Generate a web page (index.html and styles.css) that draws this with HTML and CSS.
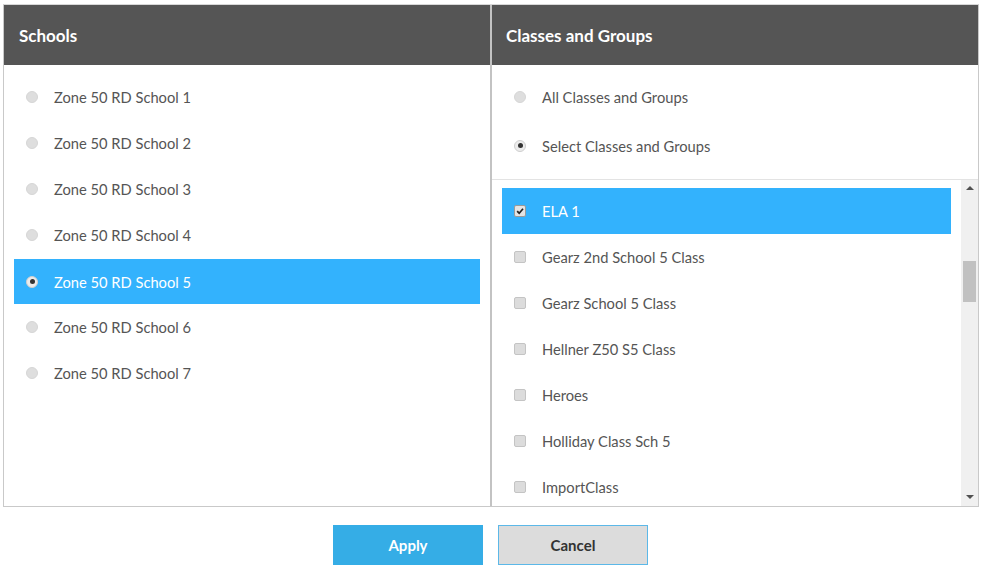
FILE: index.html
```html
<!DOCTYPE html>
<html>
<head>
<meta charset="utf-8">
<link rel="stylesheet" href="styles.css">
</head>
<body>
<div class="dialog">
  <div class="panel left">
    <div class="header">Schools</div>
    <div class="list">
      <div class="row"><span class="radio"></span><span>Zone 50 RD School 1</span></div>
      <div class="row"><span class="radio"></span><span>Zone 50 RD School 2</span></div>
      <div class="row"><span class="radio"></span><span>Zone 50 RD School 3</span></div>
      <div class="row"><span class="radio"></span><span>Zone 50 RD School 4</span></div>
      <div class="row selected"><span class="radio on"></span><span>Zone 50 RD School 5</span></div>
      <div class="row"><span class="radio"></span><span>Zone 50 RD School 6</span></div>
      <div class="row"><span class="radio"></span><span>Zone 50 RD School 7</span></div>
    </div>
  </div>
  <div class="divider"></div>
  <div class="panel right">
    <div class="header">Classes and Groups</div>
    <div class="options">
      <div class="row opt"><span class="radio"></span><span>All Classes and Groups</span></div>
      <div class="row opt"><span class="radio on"></span><span>Select Classes and Groups</span></div>
    </div>
    <div class="scroller">
      <div class="list classes">
        <div class="row selected"><span class="check on"><svg viewBox="0 0 12 12" width="12" height="12"><path d="M2.6 6.2 L5 8.6 L9.6 3.2" fill="none" stroke="#222" stroke-width="2"/></svg></span><span>ELA 1</span></div>
        <div class="row"><span class="check"></span><span>Gearz 2nd School 5 Class</span></div>
        <div class="row"><span class="check"></span><span>Gearz School 5 Class</span></div>
        <div class="row"><span class="check"></span><span>Hellner Z50 S5 Class</span></div>
        <div class="row"><span class="check"></span><span>Heroes</span></div>
        <div class="row"><span class="check"></span><span>Holliday Class Sch 5</span></div>
        <div class="row"><span class="check"></span><span>ImportClass</span></div>
        <div class="row"><span class="check"></span><span>Math 5</span></div>
      </div>
      <div class="scrollbar">
        <span class="arrow up"></span>
        <span class="track"><span class="thumb"></span></span>
        <span class="arrow down"></span>
      </div>
    </div>
  </div>
</div>
<div class="buttons">
  <button class="btn apply">Apply</button>
  <button class="btn cancel">Cancel</button>
</div>
</body>
</html>
```
FILE: styles.css
```css
* { box-sizing: border-box; }
body {
  margin: 0;
  padding: 4px 0 0 3px;
  font-family: "Source Sans Pro", Lato, "Liberation Sans", sans-serif;
  font-size: 14.7px;
  color: #555;
  background: #fff;
}
.dialog {
  width: 976px;
  height: 503px;
  border: 1px solid #c9c9c9;
  border-top-color: #d8d8d8;
  display: flex;
  overflow: hidden;
}
.panel {
  display: flex;
  flex-direction: column;
  height: 100%;
}
.left { width: 486px; }
.right { flex: 1; min-width: 0; }
.divider {
  width: 2px;
  background: #c3c3c3;
}
.header {
  height: 60px;
  flex: none;
  background: #555;
  color: #fff;
  font-weight: bold;
  font-size: 17px;
  display: flex;
  align-items: center;
  padding-left: 14px;
}
.left .header { padding-left: 15px; }
.list {
  padding: 9px 10px 0 10px;
}
.row {
  height: 46px;
  display: flex;
  align-items: center;
  padding-left: 12px;
  gap: 16px;
  white-space: nowrap;
}
.row.selected {
  background: #33b2fd;
  color: #fff;
  height: 45px;
  margin-top: 1px;
}
.classes .row.selected {
  margin-top: 0;
  height: 46px;
}
.radio {
  width: 12px;
  height: 12px;
  border-radius: 50%;
  background: #dedede;
  border: 1px solid #d6d6d6;
  flex: none;
  display: flex;
  align-items: center;
  justify-content: center;
}
.radio.on {
  background: #ececec;
  border-color: #cfcfcf;
}
.radio.on::after {
  content: "";
  width: 5px;
  height: 5px;
  border-radius: 50%;
  background: #333;
}
.options {
  padding: 7px 10px 0 10px;
  height: 115px;
  flex: none;
  border-bottom: 1px solid #e3e3e3;
}
.row.opt { height: 49px; }
.scroller {
  flex: 1;
  min-height: 0;
  display: flex;
  overflow: hidden;
}
.classes {
  flex: 1;
  padding-top: 8px;
  padding-left: 10px;
  padding-right: 10px;
  overflow: hidden;
}
.check {
  width: 12px;
  height: 12px;
  border-radius: 2px;
  background: #dcdcdc;
  border: 1px solid #c4c4c4;
  flex: none;
  display: flex;
  align-items: center;
  justify-content: center;
}
.check.on {
  background: #e4e4e4;
  border-color: #9a9a9a;
}
.check svg { display: block; }
.scrollbar {
  width: 17px;
  flex: none;
  background: #f0f0f0;
  display: flex;
  flex-direction: column;
  align-items: center;
}
.arrow {
  width: 0;
  height: 0;
  border-left: 4px solid transparent;
  border-right: 4px solid transparent;
  flex: none;
}
.arrow.up {
  border-bottom: 4px solid #505050;
  margin-top: 6px;
}
.arrow.down {
  border-top: 4px solid #505050;
  margin-bottom: 7px;
}
.track {
  flex: 1;
  width: 100%;
  padding: 0 2px;
  display: block;
}
.thumb {
  display: block;
  margin-top: 71px;
  height: 41px;
  background: #c1c1c1;
}
.buttons {
  display: flex;
  justify-content: center;
  gap: 15px;
  margin-top: 18px;
  padding-right: 8px;
}
.btn {
  width: 150px;
  height: 40px;
  font-family: "Source Sans Pro", Lato, "Liberation Sans", sans-serif;
  font-size: 15px;
  font-weight: bold;
  line-height: 38px;
  padding: 0;
  cursor: pointer;
}
.apply {
  background: #35ade6;
  color: #fff;
  border: 1px solid #35ade6;
}
.cancel {
  background: #dcdcdc;
  color: #333;
  border: 1px solid #5cb8e8;
}
```
